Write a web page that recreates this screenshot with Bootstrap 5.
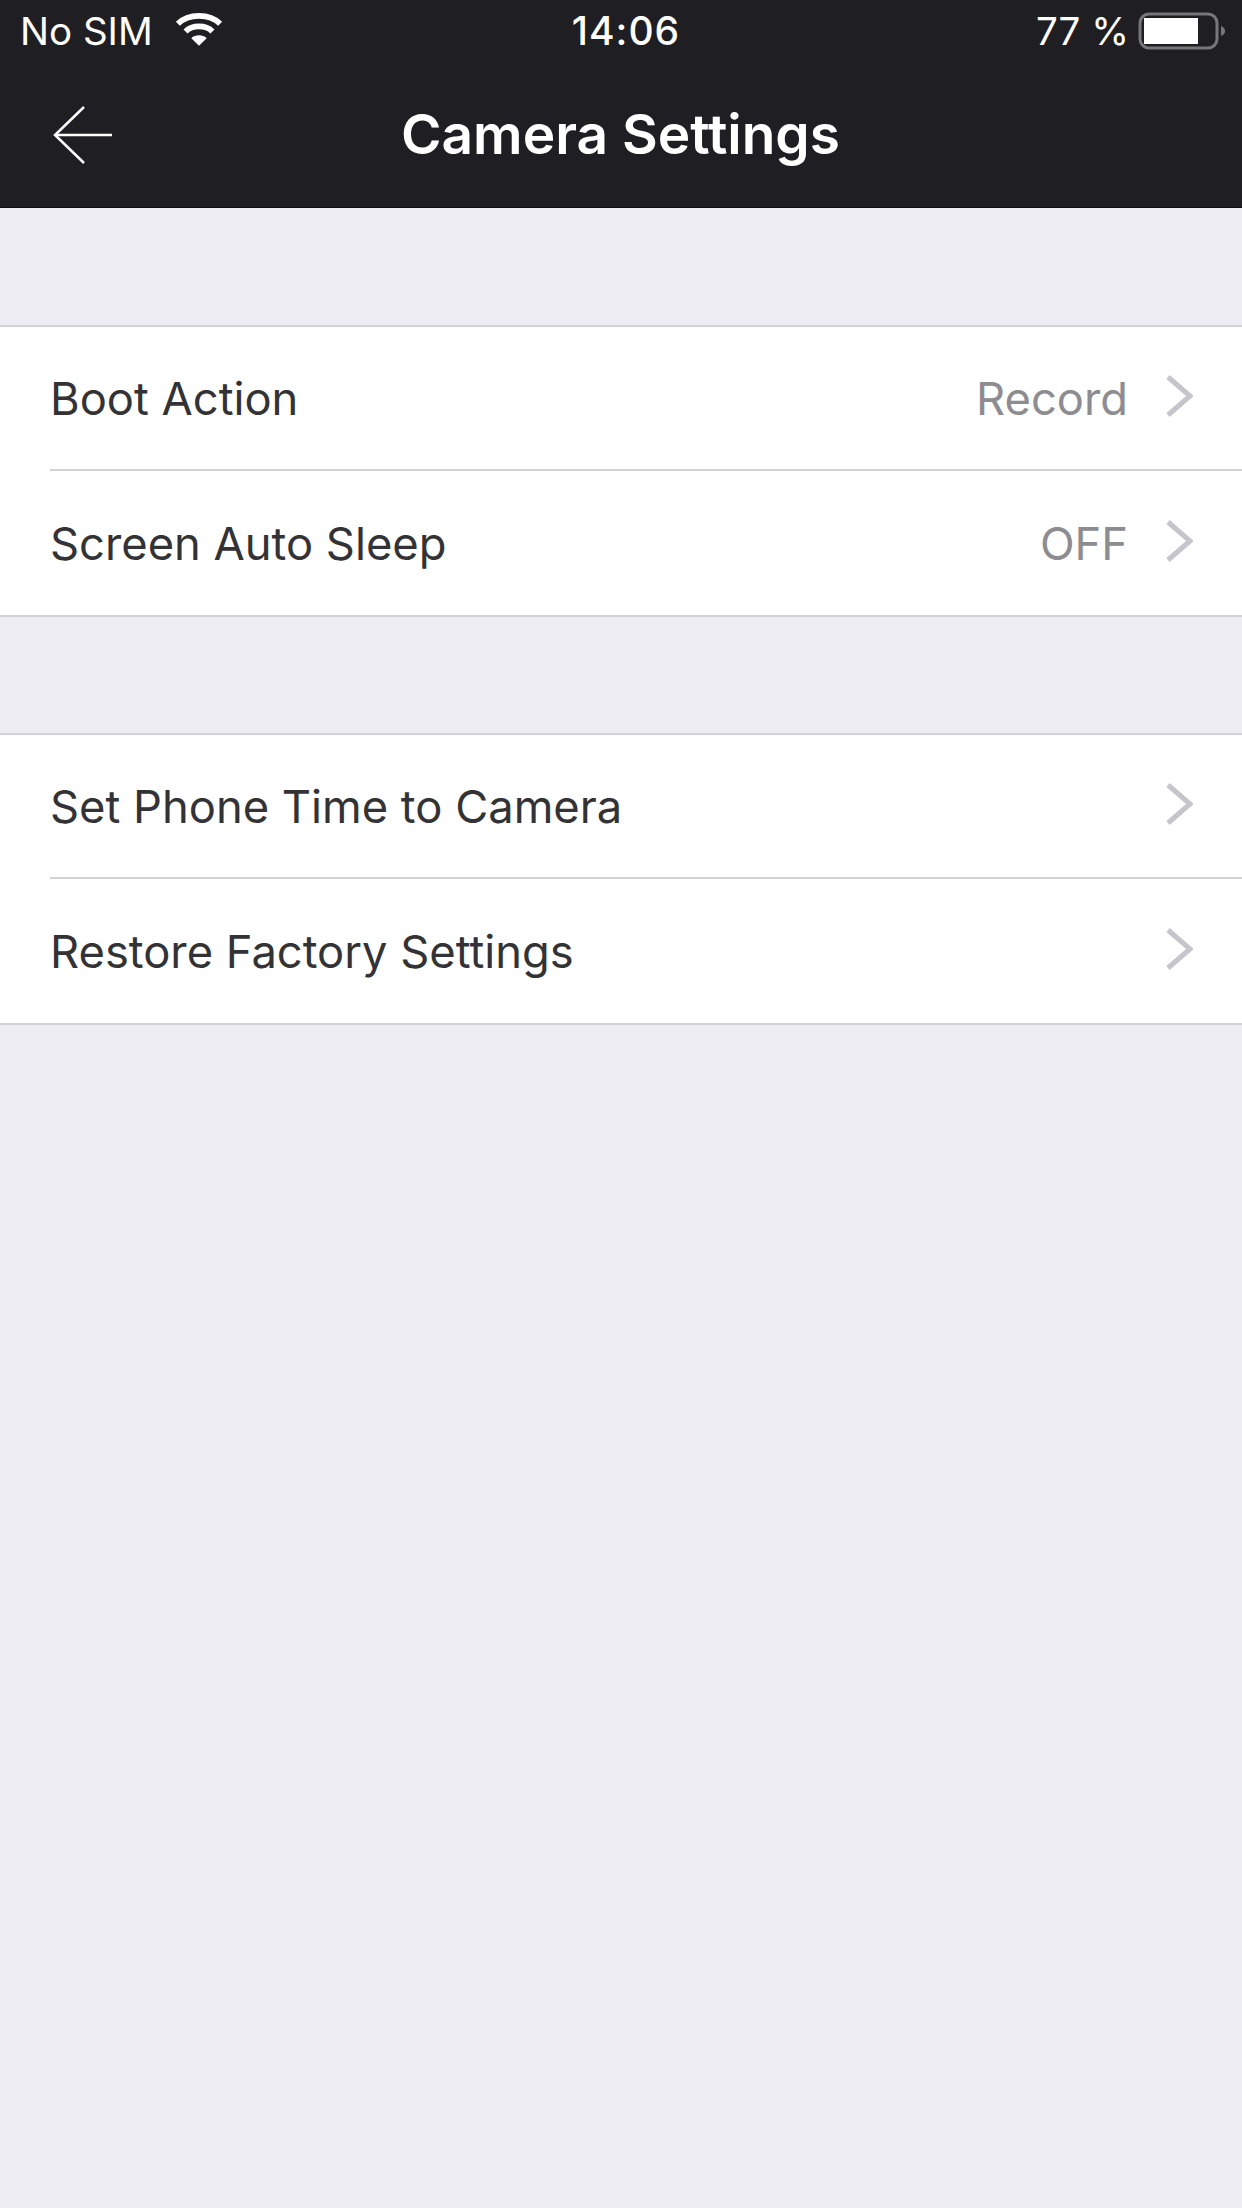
<!DOCTYPE html>
<html lang="en">
<head>
  <meta charset="UTF-8" />
  <meta name="viewport" content="width=device-width, initial-scale=1.0" />
  <title>Camera Settings</title>
  <link href="https://cdn.jsdelivr.net/npm/bootstrap@5.3.0/dist/css/bootstrap.min.css" rel="stylesheet" />
  <style>
    html, body { height: 100%; }
    body {
      background: #eeedf3;
      font-family: Inter, "Liberation Sans", sans-serif;
      color: #333336;
    }
    /* top bar */
    .app-head { background: #1f1e23; height: 208px; color: #fff; border-bottom: 1px solid #0c0c0e; }
    .status-line { height: 62px; padding: 0 16px 0 20px; font-size: 38.5px; line-height: 60px; }
    .status-side { flex: 1 1 0; }
    .status-time { font-weight: 500; font-size: 39px; letter-spacing: 1px; margin-left: 6px; }
    .title-line { height: 146px; }
    .back-btn { left: 53px; top: 50%; margin-top: -30px; line-height: 0; }
    .head-title { font-weight: 600; font-size: 55px; margin-left: -1px; margin-top: -1px; }
    .wifi-ico { margin-left: 6px; margin-top: -4px; }
    .batt-ico { margin-left: 1px; }
    /* settings groups */
    .set-group { margin-top: 116px; background: #fff; border-top: 2px solid #d2d2d8; border-bottom: 2px solid #d2d2d8; }
    .set-group:first-child { margin-top: 117px; }
    .set-row { height: 142px; padding: 2px 49px 0 50px; font-size: 45.3px; }
    .row-wrap + .row-wrap { margin-left: 50px; border-top: 2px solid #d2d2d8; }
    .row-wrap + .row-wrap .set-row { height: 144px; padding-left: 0; }
    .row-value { color: #8c8c91; margin-right: 37px; }
    .row-chev { display: block; margin-top: -7px; }
  </style>
</head>
<body>
  <header class="app-head">
    <div class="status-line d-flex align-items-center">
      <div class="status-side d-flex align-items-center gap-3">
        <span>No SIM</span>
        <svg class="wifi-ico" width="48" height="35" viewBox="0 0 50 36" fill="none" stroke="#fff" stroke-width="6">
          <path d="M3 12 C14 1 36 1 47 12" />
          <path d="M11 20 C18 13 32 13 39 20" />
          <path d="M25 35 L17 27 C21 23 29 23 33 27 Z" fill="#fff" stroke="none" />
        </svg>
      </div>
      <div class="status-time">14:06</div>
      <div class="status-side d-flex align-items-center justify-content-end gap-2">
        <span>77 %</span>
        <svg class="batt-ico" width="88" height="38" viewBox="0 0 88 38">
          <rect x="2" y="2" width="77" height="34" rx="9" fill="none" stroke="#77777a" stroke-width="3" />
          <rect x="6" y="6" width="54" height="26" fill="#fff" />
          <path d="M83 14 C86 15 87 17 87 19 C87 21 86 23 83 24 Z" fill="#77777a" />
        </svg>
      </div>
    </div>
    <div class="title-line position-relative d-flex align-items-center justify-content-center">
      <div class="back-btn position-absolute">
        <svg width="60" height="60" viewBox="0 0 60 60" fill="none" stroke="#fff" stroke-width="2.5">
          <path d="M31 2 L2 30 L31 58" />
          <path d="M2 30 H59" />
        </svg>
      </div>
      <span class="head-title">Camera Settings</span>
    </div>
  </header>

  <main>
    <section class="set-group">
      <div class="row-wrap">
        <div class="set-row d-flex align-items-center">
          <span class="flex-grow-1">Boot Action</span>
          <span class="row-value">Record</span>
          <svg class="row-chev" width="28" height="44" viewBox="0 0 28 44" fill="none" stroke="#c5c5cb" stroke-width="5"><path d="M3 3 L25 22 L3 41" /></svg>
        </div>
      </div>
      <div class="row-wrap">
        <div class="set-row d-flex align-items-center">
          <span class="flex-grow-1">Screen Auto Sleep</span>
          <span class="row-value">OFF</span>
          <svg class="row-chev" width="28" height="44" viewBox="0 0 28 44" fill="none" stroke="#c5c5cb" stroke-width="5"><path d="M3 3 L25 22 L3 41" /></svg>
        </div>
      </div>
    </section>
    <section class="set-group">
      <div class="row-wrap">
        <div class="set-row d-flex align-items-center">
          <span class="flex-grow-1">Set Phone Time to Camera</span>
          <svg class="row-chev" width="28" height="44" viewBox="0 0 28 44" fill="none" stroke="#c5c5cb" stroke-width="5"><path d="M3 3 L25 22 L3 41" /></svg>
        </div>
      </div>
      <div class="row-wrap">
        <div class="set-row d-flex align-items-center">
          <span class="flex-grow-1">Restore Factory Settings</span>
          <svg class="row-chev" width="28" height="44" viewBox="0 0 28 44" fill="none" stroke="#c5c5cb" stroke-width="5"><path d="M3 3 L25 22 L3 41" /></svg>
        </div>
      </div>
    </section>
  </main>

  <script src="https://cdn.jsdelivr.net/npm/bootstrap@5.3.0/dist/js/bootstrap.bundle.min.js"></script>
</body>
</html>
